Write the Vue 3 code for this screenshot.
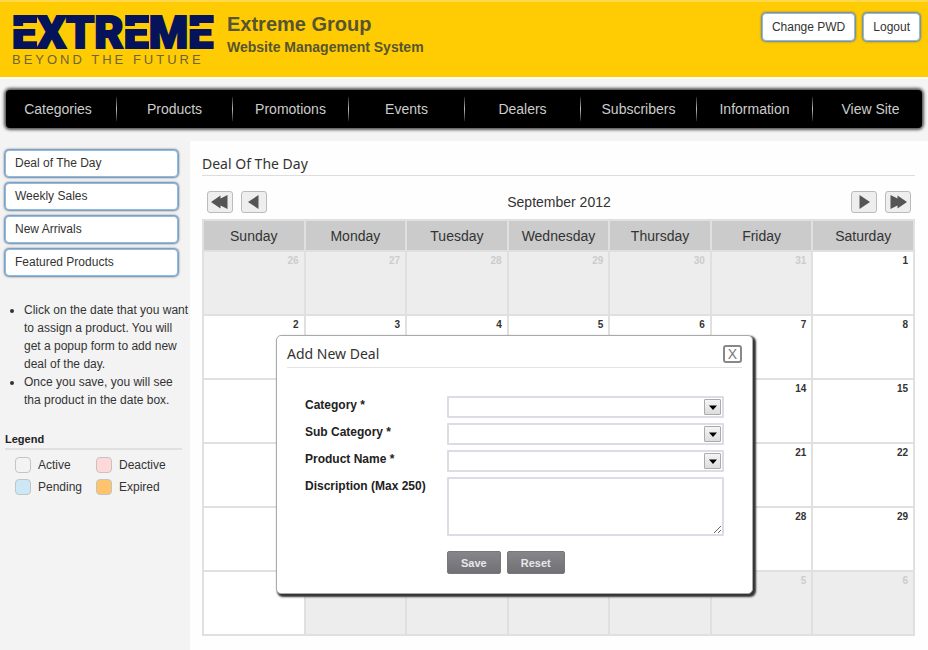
<script setup>
import { ref } from 'vue'

const menu = ['Categories', 'Products', 'Promotions', 'Events', 'Dealers', 'Subscribers', 'Information', 'View Site']
const sections = ['Deal of The Day', 'Weekly Sales', 'New Arrivals', 'Featured Products']
const legend = [
  { name: 'Active', kind: 'active' },
  { name: 'Deactive', kind: 'deactive' },
  { name: 'Pending', kind: 'pending' },
  { name: 'Expired', kind: 'expired' },
]
const weekdays = ['Sunday', 'Monday', 'Tuesday', 'Wednesday', 'Thursday', 'Friday', 'Saturday']

// Six weeks, beginning on Sunday 26 August 2012
const weeks = Array.from({ length: 6 }, (_, w) =>
  Array.from({ length: 7 }, (_, d) => {
    const date = new Date(2012, 7, 26 + w * 7 + d)
    return { day: date.getDate(), outside: date.getMonth() !== 8 }
  })
)

const fields = [
  { id: 'category', label: 'Category *' },
  { id: 'sub-category', label: 'Sub Category *' },
  { id: 'product', label: 'Product Name *' },
]
const form = ref({ category: '', 'sub-category': '', product: '', description: '' })
</script>

<template>
  <div class="page">
    <header class="top">
      <div class="logo">
        <div class="wordmark"><span class="cut">E</span>XTR<span class="cut">E</span>M<span class="cut">E</span></div>
        <div class="tagline">BEYOND THE FUTURE</div>
      </div>
      <div class="titles">
        <h1>Extreme Group</h1>
        <p>Website Management System</p>
      </div>
      <div class="account">
        <button type="button" class="glow">Change PWD</button>
        <button type="button" class="glow">Logout</button>
      </div>
    </header>

    <nav class="menu">
      <div class="menu-bar">
        <ul>
          <li v-for="item in menu" :key="item"><a href="#">{{ item }}</a></li>
        </ul>
      </div>
    </nav>

    <div class="body">
      <aside class="side">
        <a v-for="s in sections" :key="s" href="#" class="side-link glow">{{ s }}</a>
        <ul class="notes">
          <li>Click on the date that you want to assign a product. You will get a popup form to add new deal of the day.</li>
          <li>Once you save, you will see tha product in the date box.</li>
        </ul>
        <h3>Legend</h3>
        <ul class="legend">
          <li v-for="l in legend" :key="l.name"><span class="swatch" :class="l.kind"></span>{{ l.name }}</li>
        </ul>
      </aside>

      <main class="main">
        <h2>Deal Of The Day</h2>
        <div class="month">
          <button type="button" class="step" aria-label="Previous year">
            <svg width="20" height="16" viewBox="0 0 20 16"><path d="M10.5 1.5V4.5L17.5 1V15L10.5 11.5V14.5L1 8Z" /></svg>
          </button>
          <button type="button" class="step" aria-label="Previous month">
            <svg width="20" height="16" viewBox="0 0 20 16"><path d="M14.5 1V15L4 8Z" /></svg>
          </button>
          <span class="month-name">September 2012</span>
          <button type="button" class="step" aria-label="Next month">
            <svg width="20" height="16" viewBox="0 0 20 16"><path d="M5.5 1V15L16 8Z" /></svg>
          </button>
          <button type="button" class="step" aria-label="Next year">
            <svg width="20" height="16" viewBox="0 0 20 16"><path d="M9.5 1.5V4.5L2.5 1V15L9.5 11.5V14.5L19 8Z" /></svg>
          </button>
        </div>
        <table class="calendar">
          <thead>
            <tr><th v-for="d in weekdays" :key="d" scope="col">{{ d }}</th></tr>
          </thead>
          <tbody>
            <tr v-for="(week, i) in weeks" :key="i">
              <td v-for="(c, j) in week" :key="j" :class="{ outside: c.outside }">{{ c.day }}</td>
            </tr>
          </tbody>
        </table>
      </main>
    </div>

    <section class="popup" role="dialog" aria-labelledby="popup-title">
      <div class="popup-head">
        <h2 id="popup-title">Add New Deal</h2>
        <button type="button" class="close">X</button>
      </div>
      <form class="deal" @submit.prevent>
        <template v-for="f in fields" :key="f.id">
          <label :for="f.id">{{ f.label }}</label>
          <div class="pick">
            <select :id="f.id" v-model="form[f.id]"></select>
            <span class="arrow"><svg width="8" height="5" viewBox="0 0 8 5"><path d="M0 0.5H8L4 5Z" /></svg></span>
          </div>
        </template>
        <label for="description">Discription (Max 250)</label>
        <textarea id="description" v-model="form.description" maxlength="250"></textarea>
        <div class="actions">
          <button type="submit">Save</button>
          <button type="reset">Reset</button>
        </div>
      </form>
    </section>
  </div>
</template>

<style>
body {
  background: #fefefe;
}
</style>

<style scoped>
.page {
  position: relative;
  min-height: 100vh;
  display: flex;
  flex-direction: column;
  font: 12px/18px "Liberation Sans", Arial, sans-serif;
  color: #333;
}
.page * {
  box-sizing: border-box;
}
h1, h2, h3, p, ul {
  margin: 0;
  padding: 0;
}
ul {
  list-style: none;
}
a {
  color: inherit;
  text-decoration: none;
}
button, select, textarea {
  font: inherit;
  color: inherit;
  margin: 0;
}

.top {
  display: flex;
  align-items: flex-start;
  height: 77px;
  padding: 10px 8px 0 12px;
  background: #ffcb03;
  border-top: 2px solid #ffd84a;
}
.logo {
  width: 200px;
  margin-right: 15px;
}
.wordmark {
  font: 900 45px/41px Roboto, "Liberation Sans", sans-serif;
  color: #05145a;
  white-space: nowrap;
  -webkit-text-stroke: 2px #05145a;
}
.cut {
  background: linear-gradient(#05145a 38%, transparent 38%, transparent 44%, #05145a 44%);
  background-clip: text;
  color: transparent;
  -webkit-text-stroke-color: transparent;
}
.tagline {
  font-size: 13px;
  line-height: 14px;
  letter-spacing: 3px;
  white-space: nowrap;
  color: #6f6434;
}
.titles {
  flex: 1;
  color: #575530;
}
h1 {
  font-size: 20px;
  line-height: 24px;
}
.titles p {
  font-size: 14px;
  font-weight: bold;
  line-height: 22px;
}
.account {
  display: flex;
  gap: 8px;
  padding-top: 1px;
}
.glow {
  background: #fff;
  border: 1px solid #86bdee;
  border-radius: 4px;
  box-shadow: 0 0 2px 1px #6b7f94;
}
.account .glow {
  height: 28px;
  padding: 0 9px;
}

.menu {
  padding: 11px 6px 13px;
  background: #f4f4f4;
  border-top: 2px solid #fdfdf6;
}
.menu-bar {
  background: #000;
  border-radius: 4px;
  box-shadow: 0 0 3px 2px #555;
}
.menu ul {
  display: flex;
  height: 38px;
  margin: 0 -6px;
}
.menu li {
  display: flex;
  flex: 1;
  align-items: center;
}
.menu li + li::before {
  content: "";
  width: 1px;
  height: 24px;
  background: linear-gradient(#222, #bbb 50%, #222);
}
.menu a {
  flex: 1;
  font-size: 14px;
  text-align: center;
  color: #ccc;
}

.body {
  display: flex;
  flex: 1;
  background: #fefefe;
}
.side {
  width: 190px;
  padding: 9px 0 0 5px;
  background: #f3f3f3;
}
.side-link {
  display: block;
  width: 173px;
  height: 27px;
  margin-bottom: 6px;
  padding-left: 9px;
  line-height: 25px;
}
.notes {
  padding: 19px 0 21px 19px;
  list-style: disc;
}
h3 {
  margin-right: 8px;
  font-size: 11px;
  line-height: 18px;
  border-bottom: 2px solid #e0e0e0;
  color: #222;
}
.legend {
  display: grid;
  grid-template-columns: 81px 80px;
  row-gap: 4px;
  padding: 6px 0 0 10px;
}
.legend li {
  display: flex;
  align-items: center;
  gap: 7px;
}
.swatch {
  width: 16px;
  height: 16px;
  border: 1px solid #c4c4c4;
  border-radius: 4px;
}
.active { background: #f3f3f3; }
.deactive { background: #ffd9d9; }
.pending { background: #cde8f5; }
.expired { background: #fec36b; }

.main {
  flex: 1;
  padding: 12px 13px 14px 12px;
}
.main h2 {
  font: 14px/22px "Noto Sans", sans-serif;
  border-bottom: 1px solid #ddd;
}
.month {
  display: flex;
  align-items: center;
  gap: 8px;
  padding: 15px 4px 6px 5px;
}
.month-name {
  flex: 1;
  font-size: 14px;
  text-align: center;
}
.step {
  display: flex;
  align-items: center;
  justify-content: center;
  width: 26px;
  height: 22px;
  padding: 0;
  background: #eee;
  border: 1px solid #bbb;
  border-radius: 3px;
}
.step path {
  fill: #555;
}
.calendar {
  width: 100%;
  table-layout: fixed;
  border-collapse: collapse;
}
th, td {
  border: 2px solid #e0e0e0;
}
th {
  height: 31px;
  padding: 0;
  font-size: 14px;
  font-weight: normal;
  background: #cbcbcb;
}
td {
  height: 64px;
  padding: 3px 5px;
  font-size: 10px;
  line-height: 12px;
  font-weight: bold;
  text-align: right;
  vertical-align: top;
  background: #fff;
}
.outside {
  background: #ededed;
  color: #ccc;
}

.popup {
  position: absolute;
  top: 335px;
  left: 276px;
  width: 477px;
  padding: 8px 10px 19px;
  background: #fff;
  border: 1px solid #aaa;
  border-radius: 5px;
  box-shadow: 2px 2px 2px 1px #333;
}
.popup-head {
  display: flex;
  justify-content: space-between;
  align-items: flex-start;
  height: 24px;
  border-bottom: 1px solid #e4e4e4;
}
.popup-head h2 {
  font: 14px/20px "Noto Sans", sans-serif;
}
.close {
  width: 19px;
  height: 18px;
  margin-top: 1px;
  padding: 0;
  font-size: 14px;
  line-height: 14px;
  color: #777;
  background: #fff;
  border: 2px solid #888;
  border-radius: 3px;
}
.deal {
  display: grid;
  grid-template-columns: 142px 1fr;
  row-gap: 5px;
  padding: 28px 18px 0;
}
.deal label {
  font-weight: bold;
  color: #222;
}
.pick {
  position: relative;
  height: 22px;
}
select, textarea {
  display: block;
  width: 100%;
  height: 100%;
  padding: 2px 4px;
  appearance: none;
  background: #fff;
  border: 2px solid #dcdce6;
  border-radius: 1px;
}
textarea {
  height: 59px;
}
.arrow {
  position: absolute;
  top: 3px;
  right: 3px;
  display: flex;
  align-items: center;
  justify-content: center;
  width: 17px;
  height: 16px;
  background: linear-gradient(#f4f4f4, #ddd);
  border: 1px solid #aaa;
  border-radius: 1px;
  pointer-events: none;
}
.actions {
  display: flex;
  grid-column: 2;
  gap: 6px;
  padding-top: 10px;
}
.actions button {
  height: 23px;
  padding: 0 13px;
  font-size: 11px;
  font-weight: bold;
  color: #e8e8e8;
  background: linear-gradient(#85858a, #707075);
  border: 1px solid #77777c;
  border-radius: 2px;
}
</style>
